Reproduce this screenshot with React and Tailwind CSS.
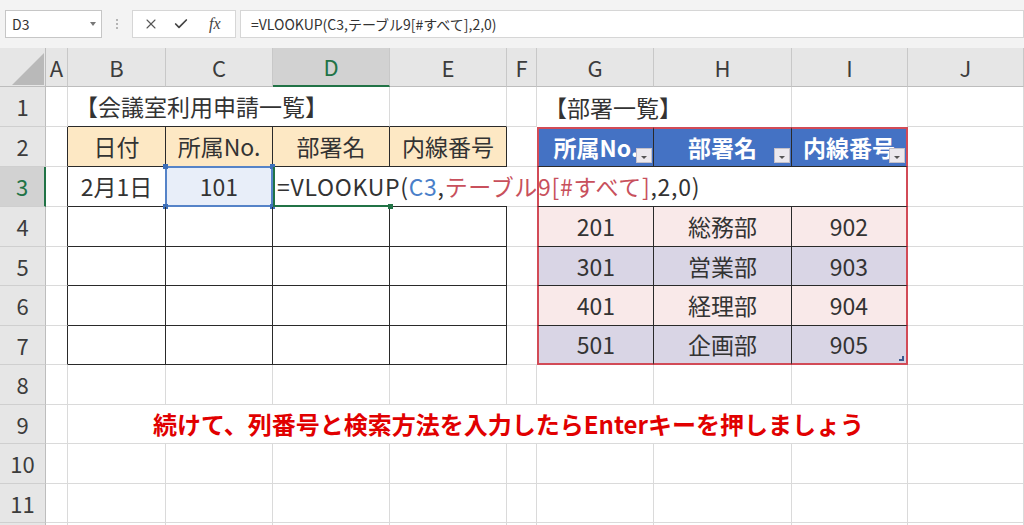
import { X, Check } from 'lucide-react';

const COLS = ['A', 'B', 'C', 'D', 'E', 'F', 'G', 'H', 'I', 'J'];

// border presets for sheet cells
const GRID_R = 'border-r border-r-[#dadada]';
const GRID_B = 'border-b border-b-[#dadada]';
const DARK_R = 'border-r border-r-[#2a2a2a]';
const DARK_B = 'border-b border-b-[#2a2a2a]';
const RED_L = 'border-l-2 border-l-[#d24b57]';
const RED_R = 'border-r-2 border-r-[#d24b57]';
const RED_T = 'border-t-2 border-t-[#d24b57]';
const RED_B = 'border-b-2 border-b-[#d24b57]';
const PLAIN = `${GRID_R} ${GRID_B}`;

const LEFT_HEAD = ['日付', '所属No.', '部署名', '内線番号'];
const RIGHT_HEAD = ['所属No.', '部署名', '内線番号'];
const DEPTS = [
  ['201', '総務部', '902', 'bg-[#f9e9e9]'],
  ['301', '営業部', '903', 'bg-[#d9d5e5]'],
  ['401', '経理部', '904', 'bg-[#f9e9e9]'],
  ['501', '企画部', '905', 'bg-[#d9d5e5]'],
];

const FilterButton = () => (
  <span className="absolute right-[1px] bottom-[3px] flex h-[15px] w-[16px] items-center justify-center border border-[#c4c0c8] bg-[#ece9ee]">
    <span className="mt-[3px] h-0 w-0 border-x-[3px] border-t-[3px] border-x-transparent border-t-[#555]" />
  </span>
);

const Cell = ({ cls = '', center, children }) => (
  <div className={`relative flex items-center ${center ? 'justify-center' : ''} ${cls}`}>
    {children}
  </div>
);

const RowHead = ({ n, active }) => (
  <div
    className={
      active
        ? 'flex items-center justify-center border-r-2 border-r-[#217346] border-b border-b-[#cfcfcf] bg-[#d2d2d2] text-[22px] text-[#217346]'
        : 'flex items-center justify-center border-r border-r-[#bdbdbd] border-b border-b-[#cfcfcf] bg-[#e6e6e6] text-[22px] text-[#3c3c3c]'
    }
  >
    {n}
  </div>
);

const plainRow = () => COLS.map((c) => <Cell key={c} cls={PLAIN} />);

const buildRows = () => {
  const rows = [];

  // row 1: titles
  rows.push([
    <Cell key="A" cls={PLAIN} />,
    <Cell key="B" cls={DARK_B}>
      <span className="relative z-10 whitespace-nowrap pl-[7px]">【会議室利用申請一覧】</span>
    </Cell>,
    <Cell key="C" cls={DARK_B} />,
    <Cell key="D" cls={`${DARK_B} ${GRID_R}`} />,
    <Cell key="E" cls={`${DARK_B} ${GRID_R}`} />,
    <Cell key="F" cls={PLAIN} />,
    <Cell key="G">
      <span className="relative z-10 whitespace-nowrap pl-[7px]">【部署一覧】</span>
    </Cell>,
    <Cell key="H" cls={GRID_R} />,
    <Cell key="I" cls={GRID_R} />,
    <Cell key="J" cls={PLAIN} />,
  ]);

  // row 2: table headers
  rows.push([
    <Cell key="A" cls={`${GRID_B} ${DARK_R}`} />,
    ...LEFT_HEAD.map((t) => (
      <Cell key={t + 'L'} center cls={`${DARK_R} ${DARK_B} bg-[#fde8c4]`}>
        {t}
      </Cell>
    )),
    <Cell key="F" cls={GRID_B} />,
    ...RIGHT_HEAD.map((t, i) => (
      <Cell
        key={t + 'R'}
        center
        cls={`${RED_T} ${DARK_B} ${i === 0 ? RED_L : ''} ${i === 2 ? RED_R : DARK_R} bg-[#4472c4] font-bold text-white`}
      >
        {t}
        <FilterButton />
      </Cell>
    )),
    <Cell key="J" cls={PLAIN} />,
  ]);

  // row 3: the row being edited
  rows.push([
    <Cell key="A" cls={`${GRID_B} ${DARK_R}`} />,
    <Cell key="B" center cls={`${DARK_R} ${DARK_B}`}>
      2月1日
    </Cell>,
    <Cell key="C" center cls={`${DARK_R} ${DARK_B} bg-[#e8eef9]`}>
      101
      <span className="absolute -inset-[1px] border-2 border-[#5583c8]" />
      <span className="absolute -top-[3px] -left-[3px] h-[5px] w-[5px] bg-[#3d6fb8]" />
      <span className="absolute -top-[3px] -right-[3px] h-[5px] w-[5px] bg-[#3d6fb8]" />
      <span className="absolute -bottom-[3px] -left-[3px] h-[5px] w-[5px] bg-[#3d6fb8]" />
      <span className="absolute -right-[3px] -bottom-[3px] h-[5px] w-[5px] bg-[#3d6fb8]" />
    </Cell>,
    <Cell key="D" cls="z-10 border-l-2 border-l-[#217346] border-b-2 border-b-[#217346] bg-white">
      <span className="whitespace-nowrap pl-[2px] tracking-[0.7px]">
        =VLOOKUP(<span className="text-[#4a7fc9]">C3</span>,
        <span className="text-[#c8505c]">テーブル9[#すべて]</span>,2,0)
      </span>
      <span className="absolute -right-[3px] -bottom-[4px] h-[5px] w-[5px] bg-[#217346]" />
    </Cell>,
    <Cell key="E" cls={`${DARK_B} bg-white`} />,
    <Cell key="F" cls={`${GRID_B} bg-white`} />,
    <Cell key="G" cls={`${RED_L} ${DARK_B} bg-white`} />,
    <Cell key="H" cls={`${DARK_B} bg-white`} />,
    <Cell key="I" cls={`${RED_R} ${DARK_B} bg-white`} />,
    <Cell key="J" cls={PLAIN} />,
  ]);

  // rows 4-7: empty entry rows and department list
  DEPTS.forEach(([no, name, ext, band], i) => {
    const last = i === DEPTS.length - 1;
    const bottom = last ? RED_B : DARK_B;
    rows.push([
      <Cell key="A" cls={`${GRID_B} ${DARK_R}`} />,
      <Cell key="B" cls={`${DARK_R} ${DARK_B}`} />,
      <Cell key="C" cls={`${DARK_R} ${DARK_B}`} />,
      <Cell key="D" cls={`${DARK_R} ${DARK_B}`} />,
      <Cell key="E" cls={`${DARK_R} ${DARK_B}`} />,
      <Cell key="F" cls={GRID_B} />,
      <Cell key="G" center cls={`${RED_L} ${DARK_R} ${bottom} ${band}`}>
        {no}
      </Cell>,
      <Cell key="H" center cls={`${DARK_R} ${bottom} ${band}`}>
        {name}
      </Cell>,
      <Cell key="I" center cls={`${RED_R} ${bottom} ${band}`}>
        {ext}
        {last && (
          <svg className="absolute right-[1px] bottom-[1px]" width="6" height="6" viewBox="0 0 6 6">
            <path d="M5 0v5H0V3h3V0z" fill="#3b5a8f" />
          </svg>
        )}
      </Cell>,
      <Cell key="J" cls={PLAIN} />,
    ]);
  });

  rows.push(plainRow());

  // row 9: note
  rows.push([
    <Cell key="A" cls={PLAIN} />,
    <Cell key="B" cls={`col-span-8 ${PLAIN}`}>
      <span className="whitespace-nowrap pl-[85px] text-[24px] font-bold text-[#e10000]">
        続けて、列番号と検索方法を入力したらEnterキーを押しましょう
      </span>
    </Cell>,
    <Cell key="J" cls={PLAIN} />,
  ]);

  rows.push(plainRow());
  rows.push(plainRow());
  rows.push(plainRow());
  return rows;
};

const FormulaBar = () => (
  <div className="flex h-[48px] items-center bg-[#f3f3f3] text-[#333]">
    <div className="ml-[5px] flex h-[28px] w-[97px] items-center justify-between border border-[#c6c6c6] bg-white pl-[6px] pr-[5px] text-[14px]">
      <span>D3</span>
      <span className="h-0 w-0 border-x-[3px] border-t-[4px] border-x-transparent border-t-[#777]" />
    </div>
    <div className="flex w-[30px] flex-col items-center gap-[2px]">
      <span className="h-[2px] w-[2px] bg-[#b5b5b5]" />
      <span className="h-[2px] w-[2px] bg-[#b5b5b5]" />
      <span className="h-[2px] w-[2px] bg-[#b5b5b5]" />
    </div>
    <div className="flex h-[28px] w-[104px] items-center border border-[#d6d6d6] bg-white pl-[10px]">
      <X size={16} strokeWidth={1.6} color="#555" />
      <Check size={16} strokeWidth={2.6} color="#444" className="ml-[14px]" />
      <span className="ml-[20px] font-['Liberation_Serif',serif] text-[16px] italic text-[#444]">fx</span>
    </div>
    <div className="ml-[4px] flex h-[28px] flex-1 items-center border border-[#d6d6d6] bg-white pl-[10px] text-[14px]">
      =VLOOKUP(C3,テーブル9[#すべて],2,0)
    </div>
  </div>
);

export default function App() {
  const rows = buildRows();
  return (
    <div className="h-[525px] w-[1024px] overflow-hidden bg-white font-['Noto_Sans_CJK_JP','Noto_Sans',sans-serif] text-[23px] text-[#333]">
      <FormulaBar />
      <div className="grid grid-cols-[46px_22px_98px_107px_117px_117px_30px_117px_138px_116px_116px] grid-rows-[39px_40px_40px_40px_40px_39px_40px_39px_40px_39px_40px_39px_40px]">
        {/* column headers */}
        <div className="relative border-r border-r-[#bdbdbd] border-b border-b-[#bdbdbd] bg-[#e6e6e6]">
          <svg className="absolute left-0 top-0" width="46" height="39" viewBox="0 0 46 39">
            <polygon points="12,37 44,37 44,5" fill="#b9b9b9" />
          </svg>
        </div>
        {COLS.map((c) =>
          c === 'D' ? (
            <div
              key={c}
              className="flex items-center justify-center border-r border-r-[#c8c8c8] border-b-2 border-b-[#217346] bg-[#d2d2d2] text-[22px] text-[#217346]"
            >
              {c}
            </div>
          ) : (
            <div
              key={c}
              className="flex items-center justify-center border-r border-r-[#c8c8c8] border-b border-b-[#bdbdbd] bg-[#e6e6e6] text-[22px] text-[#3c3c3c]"
            >
              {c}
            </div>
          )
        )}
        {rows.map((cells, i) => [
          <RowHead key={`h${i}`} n={i < 11 ? i + 1 : ''} active={i === 2} />,
          ...cells.map((cell, j) => <div key={`c${i}-${j}`} className="contents">{cell}</div>),
        ])}
      </div>
    </div>
  );
}
